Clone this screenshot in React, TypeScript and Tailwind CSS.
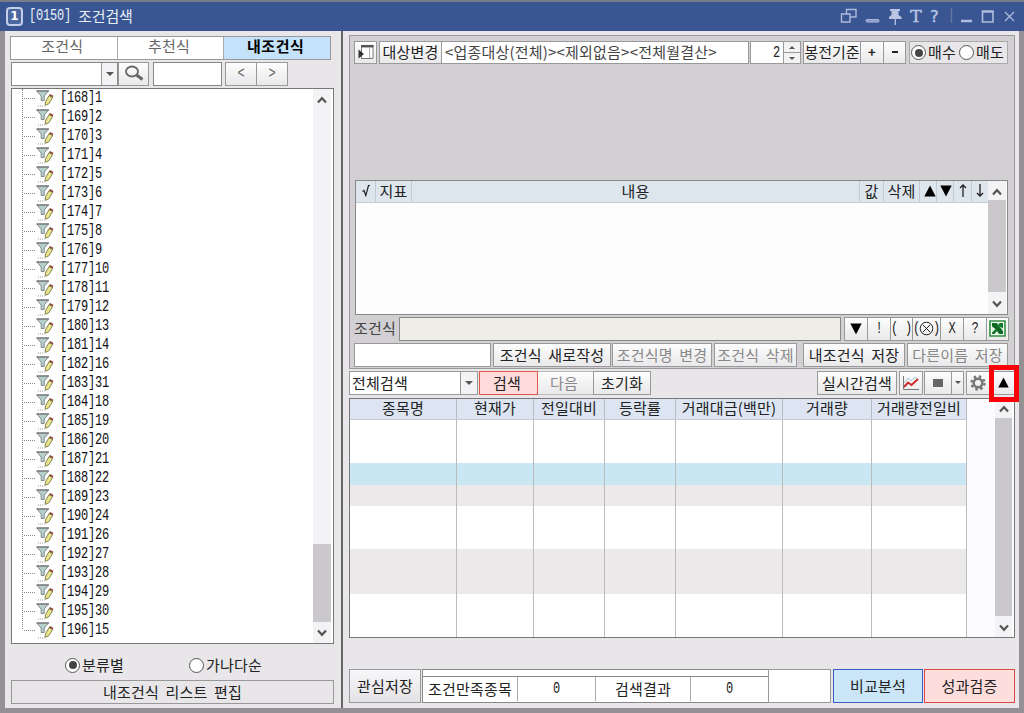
import React, { useState } from 'react';
import clsx from 'clsx';
import { twMerge } from 'tailwind-merge';

const conditions = [
  [168, 1], [169, 2], [170, 3], [171, 4], [172, 5], [173, 6], [174, 7], [175, 8], [176, 9], [177, 10],
  [178, 11], [179, 12], [180, 13], [181, 14], [182, 16], [183, 31], [184, 18], [185, 19], [186, 20], [187, 21],
  [188, 22], [189, 23], [190, 24], [191, 26], [192, 27], [193, 28], [194, 29], [195, 30], [196, 15],
];

const resultColumns = [
  { label: '종목명', width: 'w-[107px]' },
  { label: '현재가', width: 'w-[77px]' },
  { label: '전일대비', width: 'w-[71px]' },
  { label: '등락률', width: 'w-[71px]' },
  { label: '거래대금(백만)', width: 'w-[107px]' },
  { label: '거래량', width: 'w-[89px]' },
  { label: '거래량전일비', width: 'w-[95px]' },
];

const resultBands = [
  'h-[43px] bg-white',
  'h-[22px] bg-[#cae6f2]',
  'h-[21px] bg-[#ebe9ea]',
  'h-[43px] bg-white',
  'h-[45px] bg-[#ebe9ea]',
  'flex-1 bg-white',
];

interface BoxProps {
  className?: string;
  children?: React.ReactNode;
}

function Btn({ className, children }: BoxProps) {
  return (
    <button
      className={twMerge(
        'flex shrink-0 items-center justify-center whitespace-nowrap border border-[#999] bg-gradient-to-b from-[#fdfdfd] to-[#e9e8ea] pb-px [word-spacing:3px]',
        className
      )}
    >
      {children}
    </button>
  );
}

// Tall fixed-pitch digits, 7px per character
function Mono({ className, children }: BoxProps) {
  return (
    <span className={twMerge("inline-block scale-y-[1.35] font-['Liberation_Mono',monospace] text-[12px] tracking-[-0.2px]", className)}>
      {children}
    </span>
  );
}

function Radio({ checked }: { checked?: boolean }) {
  return (
    <span className="flex h-[15px] w-[15px] shrink-0 items-center justify-center rounded-full border border-[#555] bg-white">
      {checked && <span className="h-[8px] w-[8px] rounded-full bg-[#444]" />}
    </span>
  );
}

function Chevron({ down }: { down?: boolean }) {
  return (
    <svg width="10" height="8" viewBox="0 0 10 8" fill="none" stroke="#555" strokeWidth="2.2">
      <path d={down ? 'M1 1.5 5 5.8 9 1.5' : 'M1 6.5 5 2.2 9 6.5'} />
    </svg>
  );
}

function Triangle({ up, size = 12 }: { up?: boolean; size?: number }) {
  return (
    <svg width={size} height={size} viewBox="0 0 12 12" fill="#000">
      <path d={up ? 'M6 0.5 11.7 11.5H0.3Z' : 'M0.3 0.5H11.7L6 11.5Z'} />
    </svg>
  );
}

function SmallArrow({ up, width = 8 }: { up?: boolean; width?: number }) {
  return (
    <svg width={width} height={width / 2} viewBox="0 0 8 4" fill="#555">
      <path d={up ? 'M4 0 8 4H0Z' : 'M0 0H8L4 4Z'} />
    </svg>
  );
}

function FilterIcon() {
  return (
    <svg width="18" height="17" viewBox="0 0 18 17">
      <path d="M0.8 1H12.5L8.2 6V10.5H5.2V6Z" fill="#b4d0ca" stroke="#85888c" strokeWidth="1" />
      <path d="M0.5 1H13" stroke="#777" strokeWidth="1.2" />
      <path d="M9.2 15.3 9.4 12 13 5.6 16.6 7.5 12.8 13.8Z" fill="#e8e58c" stroke="#86854c" strokeWidth="1" />
      <path d="M13 5.6 14 4 17.4 5.8 16.6 7.5Z" fill="#8d4a42" />
      <path d="M2 16H8.5" stroke="#999" strokeWidth="1" strokeDasharray="1 1" />
    </svg>
  );
}

function TitleBar() {
  return (
    <div className="flex h-[31px] shrink-0 items-center border-t-2 border-[#777b8a] bg-[#395693] pl-[6px] pb-px text-[#e8edf8]">
      <span className="flex h-[19px] w-[17px] items-center justify-center rounded-[4px] border-2 border-[#c3cee8] bg-[#4d689f] font-['DejaVu_Sans'] text-[12px] font-bold text-white">
        1
      </span>
      <Mono className="ml-[6px]">[0150]</Mono>
      <span className="ml-[7px] pb-px tracking-[-0.1px]">조건검색</span>
      <svg className="ml-auto mr-[6px]" width="178" height="20" viewBox="0 0 178 20" fill="none" stroke="#aebbdd" strokeWidth="1.4">
        <path d="M6.5 3.5H16V11H6.5Z" />
        <path d="M1.5 8H10V16H1.5Z" fill="#395693" />
        <rect x="26" y="13.5" width="13" height="2.5" rx="1" fill="#8799c7" strokeWidth="1" />
        <path d="M50 3H60V5H58.5V9L61.5 11V13H49V11L51.5 9V5H50Z" fill="#b8c4e2" stroke="none" />
        <path d="M55.3 12V19" />
        <path d="M111.5 2V17" stroke="#62769f" />
        <path d="M121 15H132" strokeWidth="2.5" />
        <path d="M142.5 5H153V16H142.5Z M142.5 6H153" strokeWidth="1.6" />
        <path d="M165 6 174 15M174 6 165 15" strokeWidth="1.2" />
        <g fill="#b8c4e2" stroke="#b8c4e2" strokeWidth="0.4">
          <text x="70" y="15.5" fontFamily="DejaVu Serif" fontSize="17" textLength="12" lengthAdjust="spacingAndGlyphs">T</text>
          <text x="90" y="15.5" fontFamily="DejaVu Sans" fontSize="16" textLength="9" lengthAdjust="spacingAndGlyphs">?</text>
        </g>
      </svg>
    </div>
  );
}

function LeftPanel() {
  const [tab, setTab] = useState('내조건식');

  return (
    <div className="flex w-[336px] shrink-0 flex-col pl-[5px] pt-[5px]">
      {/* Tabs */}
      <div className="flex h-[24px] w-[321px] border border-[#999]">
        {['조건식', '추천식', '내조건식'].map((name) => (
          <button
            key={name}
            onClick={() => setTab(name)}
            className={clsx(
              'flex flex-1 items-center justify-center border-r border-[#aaa] pr-[3px] pb-[4px] last:border-r-0',
              tab === name ? 'bg-[#c4e2fa] font-bold tracking-[0.6px] text-black' : 'bg-white text-[#666]'
            )}
          >
            {name}
          </button>
        ))}
      </div>

      {/* Search row */}
      <div className="mt-[2px] flex h-[24px] pl-px">
        <div className="flex w-[107px] border border-[#888] bg-white">
          <span className="ml-auto flex w-[16px] items-center justify-center border-l border-[#999] bg-[#f3f2f4]">
            <SmallArrow />
          </span>
        </div>
        <Btn className="w-[31px]">
          <svg width="20" height="17" viewBox="0 0 20 17" fill="none" stroke="#666">
            <ellipse cx="8" cy="6.5" rx="6" ry="5" strokeWidth="1.8" />
            <path d="M12.5 10 18.5 14.5" strokeWidth="3" />
          </svg>
        </Btn>
        <div className="ml-[4px] w-[69px] border border-[#888] bg-white" />
        <Btn className="ml-[3px] w-[32px] text-[#555]">
          <Mono>&lt;</Mono>
        </Btn>
        <Btn className="-ml-px w-[32px] text-[#555]">
          <Mono>&gt;</Mono>
        </Btn>
      </div>

      {/* Condition tree */}
      <div className="mt-[2px] ml-px flex h-[556px] w-[323px] border border-[#777] bg-white">
        <div className="relative flex-1">
          <span className="absolute left-[10px] top-0 h-[540px] border-l border-dotted border-[#888]" />
          {conditions.map(([id, name]) => (
            <div key={id} className="flex h-[19px] items-center pl-[12px]">
              <span className="w-[11px] border-t border-dotted border-[#888]" />
              <span className="ml-px"><FilterIcon /></span>
              <Mono className="ml-[6px] pb-px text-[#111]">[{id}]{name}</Mono>
            </div>
          ))}
        </div>
        <div className="flex w-[18px] flex-col items-center bg-[#f3f2f4] pt-[7px] pb-[6px] mr-[2px]">
          <Chevron />
          <div className="mt-auto mb-[7px] h-[78px] w-full bg-[#cac8ca]" />
          <Chevron down />
        </div>
      </div>

      <div className="mt-[11px] flex h-[20px] items-center">
        <label className="ml-[55px] flex w-[124px] items-center gap-[2px]"><Radio checked />분류별</label>
        <label className="flex items-center gap-[2px]"><Radio />가나다순</label>
      </div>
      <Btn className="mt-[5px] ml-px h-[24px] w-[323px] from-[#e8e6e9] to-[#e8e6e9]">내조건식 리스트 편집</Btn>
    </div>
  );
}

function TargetRow() {
  return (
    <div className="flex h-[23px] pl-[4px]">
      <Btn className="w-[23px]">
        <svg width="16" height="16" viewBox="0 0 16 16">
          <path d="M3.5 1.5H15V14.5H3.5Z" fill="#fff" stroke="#777" />
          <path d="M3 2.2H15.5" stroke="#555" strokeWidth="2.5" />
          <path d="M11.5 3V14" stroke="#aaa" />
          <path d="M0.5 5.5 6 10 0.5 14.5Z" fill="#333" />
        </svg>
      </Btn>
      <Btn className="ml-[2px] w-[63px]">대상변경</Btn>
      <div className="-ml-px flex w-[308px] items-center border border-[#999] bg-white pl-[3px] pb-px text-[#444]">
        <span className="whitespace-nowrap">&lt;업종대상(전체)&gt;&lt;제외없음&gt;&lt;전체월결산&gt;</span>
      </div>
      <div className="ml-px flex w-[51px] border border-[#999] bg-white">
        <span className="flex flex-1 items-center justify-end pr-[3px]"><Mono>2</Mono></span>
        <span className="flex w-[17px] flex-col border-l border-[#999] bg-[#f3f2f4]">
          <span className="flex flex-1 items-center justify-center border-b border-[#999]"><SmallArrow up width={6} /></span>
          <span className="flex flex-1 items-center justify-center"><SmallArrow width={6} /></span>
        </span>
      </div>
      <Btn className="ml-[2px] w-[58px] tracking-[-0.1px]">봉전기준</Btn>
      <Btn className="w-[23px] border-l-0 text-[13px] font-bold">+</Btn>
      <Btn className="-ml-px w-[23px]"><span className="h-[2px] w-[6px] bg-[#222]" /></Btn>
      <div className="ml-[3px] flex w-[99px] items-center border border-[#aaa] bg-[#e8e6e9] pl-px">
        <Radio checked />
        <span className="ml-[2px] pb-px">매수</span>
        <span className="ml-[3px]"><Radio /></span>
        <span className="ml-[2px] pb-px">매도</span>
      </div>
    </div>
  );
}

function IndicatorTable() {
  const head = 'flex shrink-0 items-center justify-center border-r border-[#c3cad2] pb-[2px]';
  return (
    <div className="ml-[5px] mt-[116px] flex h-[135px] w-[653px] border border-[#888] bg-[#fdfdfe]">
      <div className="flex-1">
        <div className="flex h-[22px] border-b border-[#c3cad2] bg-[#dde5ed]">
          <span className={clsx(head, 'w-[20px]')}>
            <svg width="8" height="13" viewBox="0 0 8 13" fill="none" stroke="#222" strokeWidth="1.2"><path d="M0.5 7.5 2 6.5 3.8 11.5 6.5 1.5H8" /></svg>
          </span>
          <span className={clsx(head, 'w-[36px]')}>지표</span>
          <span className={clsx(head, 'w-[448px]')}>내용</span>
          <span className={clsx(head, 'w-[24px]')}>값</span>
          <span className={clsx(head, 'w-[36px]')}>삭제</span>
          <span className={clsx(head, 'w-[17px] pl-[3px]')}><Triangle up /></span>
          <span className={clsx(head, 'w-[17px] pl-px')}><Triangle /></span>
          <span className={clsx(head, 'w-[18px]')}>
            <svg width="8" height="13" viewBox="0 0 8 13" fill="none" stroke="#222" strokeWidth="1.3"><path d="M4 13V1M1 4 4 1 7 4" /></svg>
          </span>
          <span className="flex flex-1 items-center justify-center pb-[2px]">
            <svg width="8" height="13" viewBox="0 0 8 13" fill="none" stroke="#222" strokeWidth="1.3"><path d="M4 0V12M1 9 4 12 7 9" /></svg>
          </span>
        </div>
      </div>
      <div className="mr-px flex w-[18px] flex-col items-center bg-[#f3f2f4] pt-[7px] pb-[6px]">
        <Chevron />
        <div className="mt-[4px] mb-[8px] w-full flex-1 bg-[#cac8ca]" />
        <Chevron down />
      </div>
    </div>
  );
}

function FormulaRow() {
  return (
    <div className="mt-[2px] flex h-[24px] items-center pl-[4px]">
      <span className="w-[45px] pb-[2px] text-[#444]">조건식</span>
      <div className="h-full w-[442px] border border-[#888] bg-[#eeede8]" />
      <div className="ml-[3px] flex h-full">
        <Btn className="w-[24px]"><Triangle /></Btn>
        <Btn className="-ml-px w-[24px]"><Mono>!</Mono></Btn>
        <Btn className="-ml-px w-[23px]">
          <span className="flex gap-[7px]">
            <Mono>(</Mono>
            <Mono>)</Mono>
          </span>
        </Btn>
        <Btn className="-ml-px w-[29px]">
          <Mono className="-mr-px">(</Mono>
          <svg width="15" height="15" viewBox="0 0 15 15" fill="none" stroke="#222">
            <circle cx="7.5" cy="7.5" r="6.3" />
            <path d="M4 4 11 11M11 4 4 11" />
          </svg>
          <Mono className="-ml-px">)</Mono>
        </Btn>
        <Btn className="-ml-px w-[24px]"><Mono>X</Mono></Btn>
        <Btn className="-ml-px w-[24px]"><Mono>?</Mono></Btn>
        <Btn className="-ml-px w-[23px]">
          <svg width="17" height="17" viewBox="0 0 17 17">
            <path d="M1 1H16V16H1Z" fill="#f2faf3" stroke="#2f8f40" strokeWidth="1.6" />
            <path d="M3 3H8L14 11V14H3Z" fill="#14762a" />
            <path d="M10.5 3H14V8.5L9 5.5Z" fill="#14762a" />
            <path d="M3 6.5 6.5 9 3 12.5ZM8 11 10 14H5.5Z" fill="#e6f4e8" />
            <path d="M3.5 3.5 13.5 13.5" stroke="#0b631d" strokeWidth="2.4" />
          </svg>
        </Btn>
      </div>
    </div>
  );
}

function SaveRow() {
  return (
    <div className="mt-[2px] flex h-[24px] pl-[4px]">
      <div className="w-[137px] border border-[#999] bg-white" />
      <Btn className="ml-[2px] w-[118px]">조건식 새로작성</Btn>
      <Btn className="ml-px w-[100px] text-[#888]">조건식명 변경</Btn>
      <Btn className="ml-[2px] w-[83px] text-[#888]">조건식 삭제</Btn>
      <Btn className="ml-[6px] w-[102px]">내조건식 저장</Btn>
      <Btn className="ml-[2px] w-[101px] text-[#888]">다른이름 저장</Btn>
    </div>
  );
}

function SearchToolbar() {
  return (
    <div className="mt-[2px] flex h-[24px]">
      <div className="flex w-[129px] items-center border border-[#999] bg-white pl-[2px]">
        <span className="pb-px">전체검색</span>
        <span className="ml-auto flex h-full w-[17px] items-center justify-center border-l border-[#999] bg-[#f3f2f4]">
          <SmallArrow />
        </span>
      </div>
      <Btn className="ml-px w-[59px] border-[#e0584c] from-[#fddcdb] to-[#fddcdb] pr-[3px]">검색</Btn>
      <Btn className="w-[56px] border-l-0 border-[#bbb] pr-[3px] text-[#888]">다음</Btn>
      <Btn className="-ml-px w-[58px]">초기화</Btn>
      <Btn className="ml-auto w-[80px]">실시간검색</Btn>
      <Btn className="ml-[2px] w-[24px]">
        <svg width="18" height="16" viewBox="0 0 18 16" fill="none">
          <path d="M1.5 1V14.5H17" stroke="#777" />
          <path d="M2 8 6 3 9 6 13 2 16 6" stroke="#a6c4d8" />
          <path d="M2 12 6 7.5 9.5 10 16 4" stroke="#d02a2a" strokeWidth="2" />
        </svg>
      </Btn>
      <Btn className="ml-px w-[28px]"><span className="h-[8px] w-[10px] bg-[#666]" /></Btn>
      <Btn className="-ml-px w-[13px]"><SmallArrow width={6} /></Btn>
      <Btn className="ml-[2px] w-[24px]">
        <svg width="16" height="16" viewBox="0 0 16 16" fill="none" stroke="#777">
          <circle cx="8" cy="8" r="4.3" strokeWidth="2.5" />
          <circle cx="8" cy="8" r="6.5" strokeWidth="2.4" strokeDasharray="2.55 2.55" />
        </svg>
      </Btn>
      <div className="relative ml-px flex">
        <Btn className="w-[24px]"><Triangle up size={11} /></Btn>
        <span className="absolute -left-[2px] -top-[6px] z-10 h-[37px] w-[30px] border-[5px] border-[#fb0009]" />
      </div>
    </div>
  );
}

function ResultTable() {
  return (
    <div className="mt-[3px] flex h-[240px] border border-[#777] bg-[#fcfbfd]">
      <div className="flex w-[617px] flex-col">
        <div className="flex h-[21px] shrink-0 border-b border-[#c3cad2] bg-[#dce5f1]">
          {resultColumns.map((col) => (
            <span key={col.label} className={clsx('flex shrink-0 items-center justify-center whitespace-nowrap border-r border-[#b5bcc6] pb-[2px]', col.width)}>
              {col.label}
            </span>
          ))}
        </div>
        {resultBands.map((band, idx) => (
          <div key={idx} className={clsx('flex', band)}>
            {resultColumns.map((col) => (
              <span key={col.label} className={clsx('shrink-0 border-r border-[#bbb]', col.width)} />
            ))}
          </div>
        ))}
      </div>
      <div className="ml-auto mr-[2px] flex w-[17px] flex-col items-center bg-[#f3f2f4] pt-[6px] pb-[5px]">
        <Chevron />
        <div className="mt-[5px] mb-[8px] w-full flex-1 bg-[#cac8ca]" />
        <Chevron down />
      </div>
    </div>
  );
}

function Footer() {
  const cell = 'flex items-center justify-center border-r border-[#aaa]';
  return (
    <div className="mt-[31px] flex h-[34px]">
      <Btn className="w-[72px] from-[#f7f6f8] to-[#e4e2e5]">관심저장</Btn>
      <div className="ml-px flex w-[347px] flex-col border border-[#888] bg-white">
        <div className="h-[7px] border-b border-[#888]" />
        <div className="flex flex-1 pb-px">
          <span className={clsx(cell, 'w-[95px]')}>조건만족종목</span>
          <span className={clsx(cell, 'w-[78px]')}><Mono>0</Mono></span>
          <span className={clsx(cell, 'w-[95px]')}>검색결과</span>
          <span className="flex flex-1 items-center justify-center"><Mono>0</Mono></span>
        </div>
      </div>
      <div className="-ml-px w-[63px] border border-[#999] bg-white" />
      <Btn className="ml-[2px] w-[90px] border-[#3a5cc4] from-[#cae6f8] to-[#cae6f8]">비교분석</Btn>
      <Btn className="ml-px w-[91px] border-[#dd4a40] from-[#fddedc] to-[#fddedc]">성과검증</Btn>
    </div>
  );
}

export default function App() {
  return (
    <div className="flex h-[713px] w-[1024px] flex-col overflow-hidden bg-[#e8e6e9] font-['Noto_Sans_CJK_KR',sans-serif] text-[15px] leading-[18px] tracking-[0.2px] text-[#222] [word-spacing:3px]">
      <TitleBar />
      <div className="flex flex-1 border-x-[5px] border-b-[5px] border-[#939193]">
        <LeftPanel />
        <div className="w-[2px] shrink-0 bg-[#666]" />
        <div className="flex-1 pl-[6px] pr-[4px] pt-[4px]">
          {/* Condition editor */}
          <div className="h-[334px] border border-[#999] bg-[#d2d0d3] pt-[5px]">
            <TargetRow />
            <IndicatorTable />
            <FormulaRow />
            <SaveRow />
          </div>
          {/* Search results */}
          <SearchToolbar />
          <ResultTable />
          <Footer />
        </div>
      </div>
    </div>
  );
}
